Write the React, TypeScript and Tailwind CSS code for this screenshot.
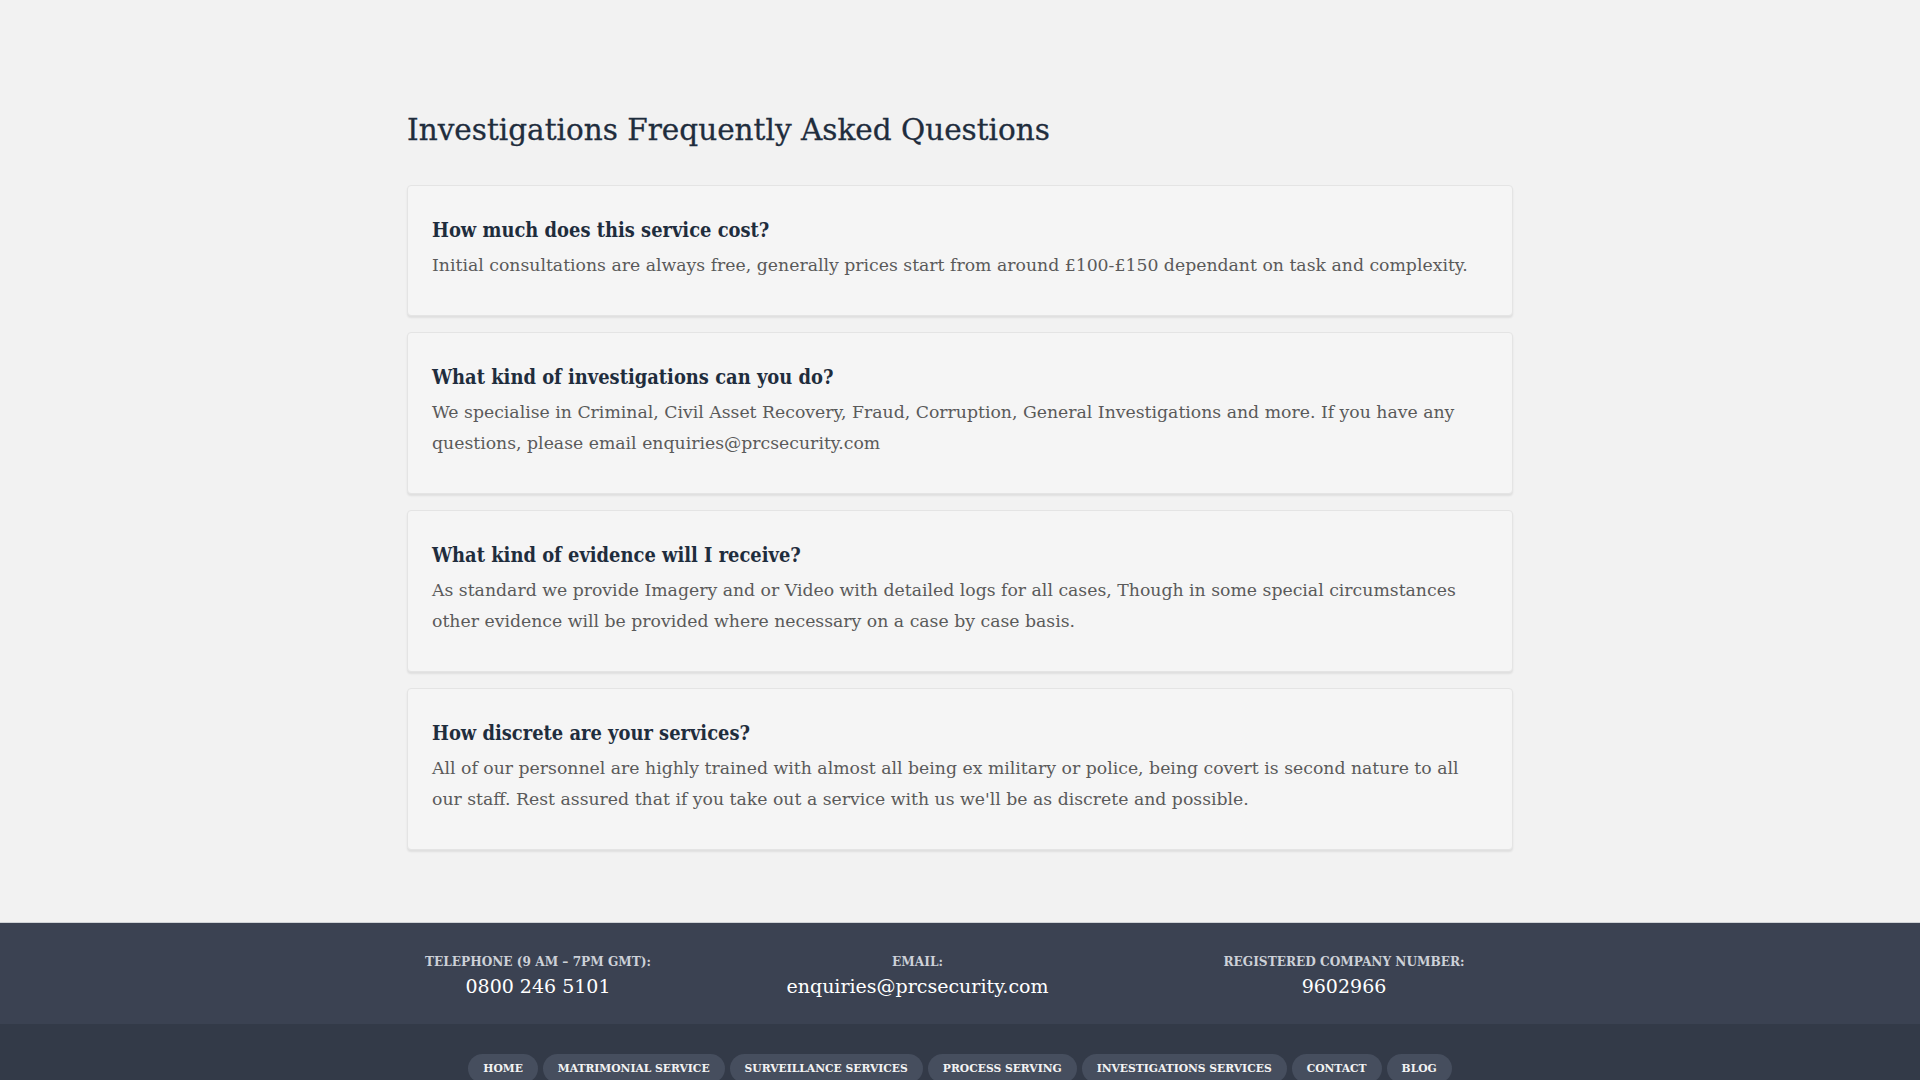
import React from "react";

const faqs = [
  {
    q: "How much does this service cost?",
    a: "Initial consultations are always free, generally prices start from around £100-£150 dependant on task and complexity.",
  },
  {
    q: "What kind of investigations can you do?",
    a: "We specialise in Criminal, Civil Asset Recovery, Fraud, Corruption, General Investigations and more. If you have any questions, please email enquiries@prcsecurity.com",
  },
  {
    q: "What kind of evidence will I receive?",
    a: "As standard we provide Imagery and or Video with detailed logs for all cases, Though in some special circumstances other evidence will be provided where necessary on a case by case basis.",
  },
  {
    q: "How discrete are your services?",
    a: "All of our personnel are highly trained with almost all being ex military or police, being covert is second nature to all our staff. Rest assured that if you take out a service with us we'll be as discrete and possible.",
  },
];

const links = [
  "Home",
  "Matrimonial Service",
  "Surveillance Services",
  "Process Serving",
  "Investigations Services",
  "Contact",
  "Blog",
];

const contacts = [
  { label: "Telephone (9 AM – 7PM GMT):", value: "0800 246 5101", width: "w-[266px]" },
  { label: "Email:", value: "enquiries@prcsecurity.com", width: "w-[493px]" },
  { label: "Registered Company Number:", value: "9602966", width: "w-[360px]" },
];

const App: React.FC = () => {
  return (
    <div className="min-h-screen bg-[#f2f2f2] font-['DejaVu_Serif',serif]">
      <main className="mx-auto w-[1106px] pt-[113px] pb-[72px]">
        <h1 className="mb-[37px] text-[29.5px] leading-[1.2] text-[#1f2d3d] [-webkit-text-stroke:0.3px_#1f2d3d]">
          Investigations Frequently Asked Questions
        </h1>

        {/* FAQ cards */}
        <div className="flex flex-col gap-4">
          {faqs.map((f) => (
            <div
              key={f.q}
              className="rounded-[4px] border border-[#e4e4e4] bg-[#f5f5f5] px-6 pt-[33px] pb-[34px] shadow-[0_2px_2px_rgba(0,0,0,0.08)]"
            >
              <h3 className="mb-[9px] font-['DejaVu_Serif_Condensed','DejaVu_Serif',serif] text-[19.9px] font-bold leading-[22px] text-[#1f2d3d]">
                {f.q}
              </h3>
              <p className="text-[17.27px] leading-[31px] text-[#5a5a5a]">{f.a}</p>
            </div>
          ))}
        </div>
      </main>

      <footer className="border-t border-[#cfd2d6]">
        {/* Contact details */}
        <div className="bg-[#3b4252] pt-[28.3px] pb-[24.3px]">
          <div className="mx-auto flex w-[1110px]">
            {contacts.map((c) => (
              <div key={c.label} className={`${c.width} shrink-0 text-center`}>
                <div className="font-['DejaVu_Serif_Condensed','DejaVu_Serif',serif] text-[13.5px] font-bold uppercase leading-[18px] text-[#cdd1d8]">
                  {c.label}
                </div>
                <div className="mt-[2px] text-[19px] leading-[1.5] text-white">{c.value}</div>
              </div>
            ))}
          </div>
        </div>

        {/* Nav pills */}
        <div className="bg-[#333a48] pt-[29.5px] pb-[29px]">
          <nav className="mx-auto flex w-fit gap-[5px]">
            {links.map((l) => (
              <a
                key={l}
                href="#"
                className="rounded-full bg-[#464e5e] px-[15px] py-[6.5px] font-['DejaVu_Serif_Condensed','DejaVu_Serif',serif] text-[11.95px] font-bold uppercase leading-4 text-[#f3f3f3]"
              >
                {l}
              </a>
            ))}
          </nav>
        </div>
      </footer>
    </div>
  );
};

export default App;
